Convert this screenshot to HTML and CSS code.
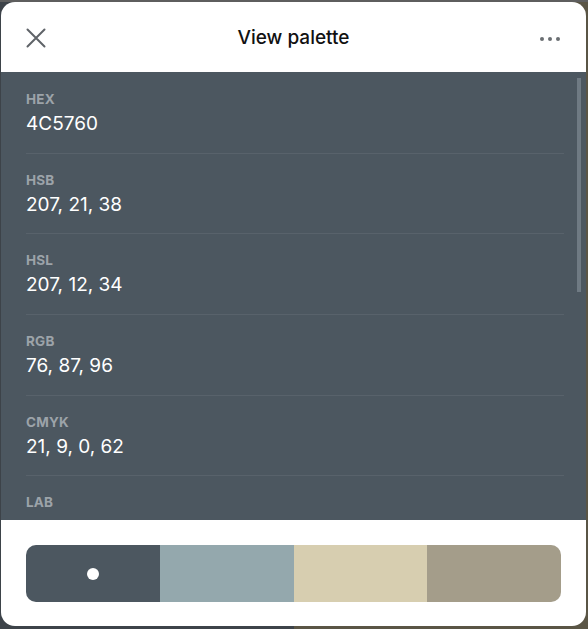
FILE: index.html
```html
<!DOCTYPE html>
<html lang="en">
<head>
<meta charset="utf-8">
<title>View palette</title>
<link rel="stylesheet" href="styles.css">
</head>
<body>
<div class="modal">
  <header class="head">
    <button class="icon-btn close" aria-label="Close">
      <svg width="20" height="20" viewBox="0 0 20 20"><path d="M1.5 1.5 L18.5 18.5 M18.5 1.5 L1.5 18.5" stroke="#5f6368" stroke-width="2" stroke-linecap="round" fill="none"/></svg>
    </button>
    <h1 class="title">View palette</h1>
    <button class="icon-btn more" aria-label="More">
      <svg width="22" height="6" viewBox="0 0 22 6"><circle cx="3" cy="3" r="2" fill="#6a6e72"/><circle cx="11" cy="3" r="2" fill="#6a6e72"/><circle cx="19" cy="3" r="2" fill="#6a6e72"/></svg>
    </button>
  </header>
  <div class="body">
    <div class="list">
      <div class="row"><div class="label">HEX</div><div class="value">4C5760</div></div>
      <div class="row"><div class="label">HSB</div><div class="value">207, 21, 38</div></div>
      <div class="row"><div class="label">HSL</div><div class="value">207, 12, 34</div></div>
      <div class="row"><div class="label">RGB</div><div class="value">76, 87, 96</div></div>
      <div class="row"><div class="label">CMYK</div><div class="value">21, 9, 0, 62</div></div>
      <div class="row"><div class="label">LAB</div></div>
    </div>
    <div class="scrollbar"></div>
  </div>
  <footer class="foot">
    <div class="palette">
      <div class="sw sw1"><span class="dot"></span></div>
      <div class="sw sw2"></div>
      <div class="sw sw3"></div>
      <div class="sw sw4"></div>
    </div>
  </footer>
</div>
</body>
</html>
```

FILE: styles.css
```css
html, body {
  margin: 0;
  padding: 0;
}
body {
  width: 588px;
  height: 629px;
  overflow: hidden;
  background:
    linear-gradient(#5e5e5e, #5e5e5e) top / 100% 2px no-repeat,
    linear-gradient(to right, #3d4349 0%, #3d4349 50%, #5a5545 50%, #5a5545 100%);
  font-family: Inter, "Noto Sans", sans-serif;
}
.modal {
  margin: 2px 0 0 1px;
  width: 585px;
  height: 624px;
  border-radius: 14px;
  overflow: hidden;
  background: #fff;
  display: flex;
  flex-direction: column;
}
.head {
  height: 70px;
  flex: none;
  display: flex;
  align-items: center;
  justify-content: space-between;
  padding: 0 24px 0 24px;
  box-sizing: border-box;
  position: relative;
}
.icon-btn {
  border: 0;
  background: none;
  padding: 0;
  display: flex;
  align-items: center;
  justify-content: center;
}
.close {
  width: 22px;
  height: 22px;
  margin-top: 2px;
}
.more {
  width: 24px;
  height: 10px;
  margin-top: 3px;
}
.title {
  margin: 0;
  font-size: 19px;
  font-weight: 500;
  color: #111;
  position: absolute;
  left: 0;
  right: 0;
  text-align: center;
  top: 24px;
  line-height: 24px;
  pointer-events: none;
}
.body {
  height: 448px;
  flex: none;
  background: #4c5760;
  position: relative;
  overflow: hidden;
}
.list {
  padding: 1px 22px 0 25px;
}
.row {
  padding: 18px 0 16.67px 0;
  border-bottom: 1px solid rgba(255, 255, 255, 0.07);
}
.label {
  font-size: 13.5px;
  line-height: 16px;
  font-weight: 700;
  color: #9ca3a9;
  letter-spacing: 0.2px;
}
.value {
  margin-top: 5px;
  font-size: 19px;
  line-height: 24px;
  color: #fff;
  font-weight: 400;
}
.scrollbar {
  position: absolute;
  right: 5px;
  top: 6px;
  width: 4px;
  height: 214px;
  background: #6f7a83;
}
.foot {
  flex: 1;
  padding: 25px 25px 0 25px;
}
.palette {
  display: flex;
  height: 57px;
  border-radius: 10px;
  overflow: hidden;
  box-shadow: inset 0 0 0 1px rgba(0, 0, 0, 0.08);
}
.sw {
  flex: 1;
  display: flex;
  align-items: center;
  justify-content: center;
}
.sw1 { background: #4c5760; }
.sw2 { background: #94a8ad; }
.sw3 { background: #d7ceb0; }
.sw4 { background: #a49d8a; }
.dot {
  width: 12px;
  height: 12px;
  border-radius: 50%;
  background: #fff;
}
```
